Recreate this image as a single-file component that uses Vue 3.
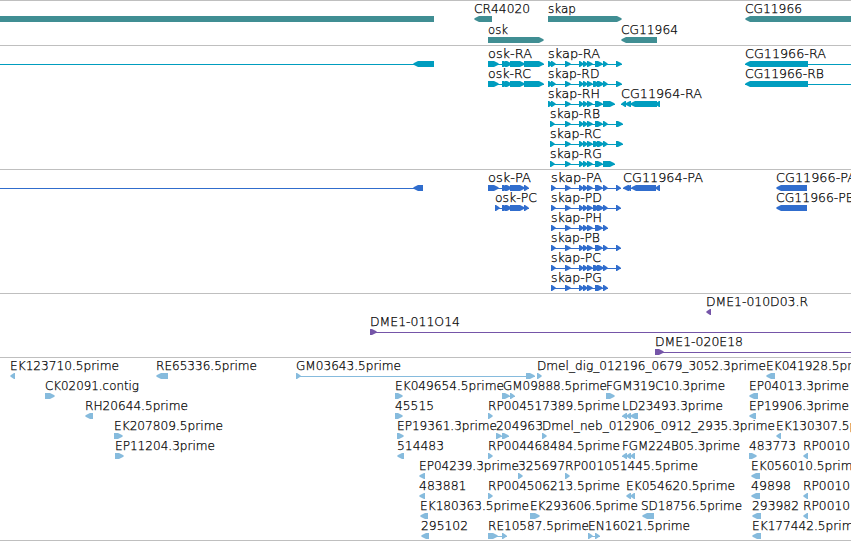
<script setup>
// f(label, x, labelWidth, row, direction, parts, line)
const f = (label, x, w, row, dir, parts, line) => ({ label, x, w, row, dir, parts, line })

const mid = [[565, 571], [579, 584], [583, 588], [587, 593]]
const oskTail = [[502, 509], [505, 512], [510, 521], [516, 525]]

const genes = [
  f('', 0, 0, 0, 0, [[0, 434]]),
  f('CR44020', 474, 56, 0, -1, [[474, 492]]),
  f('skap', 548, 28, 0, 1, [[548, 622]]),
  f('CG11966', 745, 57, 0, -1, [[745, 860]]),
  f('osk', 488, 20, 1, 1, [[488, 544]]),
  f('CG11964', 621, 57, 1, -1, [[621, 657]]),
]
const transcripts = [
  f('', 0, 0, 0, -1, [[413, 434]], [0, 434]),
  f('osk-RA', 488, 44, 0, 1, [[488, 499], ...oskTail, [524, 544]], [488, 544]),
  f('skap-RA', 548, 52, 0, 1, [[548, 553], [551, 556], ...mid, [595, 603], [603, 608], [616, 622]], [548, 622]),
  f('CG11966-RA', 745, 81, 0, -1, [[745, 808]], [745, 851]),
  f('osk-RC', 488, 43, 1, 1, [[488, 499], ...oskTail, [524, 544]], [488, 544]),
  f('skap-RD', 548, 51.5, 1, 1, [[548, 553], [551, 556], ...mid, [593, 600], [597, 604], [603, 608], [616, 622]], [548, 622]),
  f('CG11966-RB', 745, 79, 1, -1, [[745, 808]], [745, 851]),
  f('skap-RH', 548, 52, 2, 1, [[548, 553], [551, 556], ...mid, [595, 603], [603, 615]], [548, 615]),
  f('CG11964-RA', 621, 81, 2, -1, [[621, 626], [625, 631], [630, 657], [655, 660]], [621, 660]),
  f('skap-RB', 550, 50, 3, 1, [[550, 555], ...mid, [595, 603], [603, 608], [616, 623]], [550, 623]),
  f('skap-RC', 550, 51, 4, 1, [[550, 555], ...mid, [593, 600], [597, 604], [603, 608], [616, 623]], [550, 623]),
  f('skap-RG', 550, 52, 5, 1, [[550, 555], ...mid, [595, 603], [603, 615]], [550, 615]),
]
const proteins = [
  f('', 0, 0, 0, -1, [[413, 423]], [0, 423]),
  f('osk-PA', 488, 43, 0, 1, [[488, 499], ...oskTail, [524, 529]], [488, 529]),
  f('skap-PA', 551, 51, 0, 1, [[551, 556], ...mid, [595, 603], [603, 608], [616, 621]], [551, 621]),
  f('CG11964-PA', 623, 80, 0, -1, [[623, 629], [626, 631], [631, 656], [655, 660]], [623, 660]),
  f('CG11966-PA', 776, 80, 0, -1, [[776, 807]]),
  f('osk-PC', 495, 42, 1, 1, [[495, 500], ...oskTail, [524, 529]], [495, 529]),
  f('skap-PD', 551, 51, 1, 1, [[551, 556], ...mid, [593, 600], [597, 604], [603, 608], [616, 621]], [551, 621]),
  f('CG11966-PB', 776, 78, 1, -1, [[776, 807]]),
  f('skap-PH', 551, 51, 2, 1, [[551, 556], ...mid, [595, 603], [603, 608]], [551, 608]),
  f('skap-PB', 551, 49, 3, 1, [[551, 556], ...mid, [595, 603], [603, 608], [616, 621]], [551, 621]),
  f('skap-PC', 551, 50, 4, 1, [[551, 556], ...mid, [593, 600], [597, 604], [603, 608], [616, 621]], [551, 621]),
  f('skap-PG', 551, 51, 5, 1, [[551, 556], ...mid, [595, 603], [603, 608]], [551, 608]),
]
const clones = [
  f('DME1-010D03.R', 706, 102, 0, -1, [[706, 711]]),
  f('DME1-011O14', 370, 90, 1, 1, [[370, 377]], [370, 851]),
  f('DME1-020E18', 655, 88, 2, 1, [[655, 664]], [655, 851]),
]
const ests = [
  f('EK123710.5prime', 10, 109, 0, -1, [[10, 15]]),
  f('RE65336.5prime', 156, 101, 0, -1, [[156, 168]]),
  f('GM03643.5prime', 296, 105, 0, 1, [[296, 301], [526, 535]], [296, 535]),
  f('Dmel_dig_012196_0679_3052.3prime', 537, 229, 0, 1, [[537, 542]]),
  f('EK041928.5prime', 766, 109, 0, -1, [[766, 775]]),
  f('CK02091.contig', 45, 94, 1, 1, [[45, 55]]),
  f('EK049654.5prime', 395, 109, 1, 1, [[395, 403]]),
  f('GM09888.5prime', 503, 104, 1, 1, [[502, 510], [510, 515]], [502, 515]),
  f('FGM319C10.3prime', 606, 119, 1, 1, [[606, 615]]),
  f('EP04013.3prime', 749, 100, 1, -1, [[749, 758]]),
  f('RH20644.5prime', 85, 103, 2, -1, [[85, 93]]),
  f('45515', 395, 39, 2, 1, [[395, 403]]),
  f('RP004517389.5prime', 488, 132, 2, 1, [[488, 493]]),
  f('LD23493.3prime', 622, 101, 2, -1, [[622, 627], [626, 631], [630, 638]], [622, 638]),
  f('EP19906.3prime', 749, 100, 2, -1, [[749, 756]]),
  f('EK207809.5prime', 114, 109, 3, 1, [[114, 123]]),
  f('EP19361.3prime', 397, 100, 3, 1, [[397, 404]]),
  f('204963', 496, 47, 3, 1, [[496, 502], [502, 509]], [496, 509]),
  f('Dmel_neb_012906_0912_2935.3prime', 542, 233, 3, 1, [[542, 547]]),
  f('EK130307.5prime', 776, 109, 3, -1, [[776, 781]]),
  f('EP11204.3prime', 115, 100, 4, 1, [[115, 124]]),
  f('514483', 397, 47, 4, -1, [[397, 404]]),
  f('RP004468484.5prime', 488, 132, 4, 1, [[488, 493]]),
  f('FGM224B05.3prime', 622, 118, 4, -1, [[622, 627], [626, 631], [630, 635]], [622, 635]),
  f('483773', 749, 47, 4, 1, [[749, 757]]),
  f('RP0010', 803, 47, 4, -1, [[803, 808]]),
  f('EP04239.3prime', 419, 100, 5, -1, [[419, 425]]),
  f('325697', 518, 47, 5, 1, [[518, 523]]),
  f('RP001051445.5prime', 565, 133, 5, 1, [[565, 570]]),
  f('EK056010.5prime', 751, 109, 5, -1, [[751, 760]]),
  f('483881', 419, 47.5, 6, -1, [[419, 425]]),
  f('RP004506213.5prime', 488, 132, 6, 1, [[488, 493]]),
  f('EK054620.5prime', 626, 109, 6, -1, [[626, 631], [630, 635]]),
  f('49898', 751, 40, 6, -1, [[751, 760]]),
  f('RP0010', 803, 47, 6, -1, [[803, 808]]),
  f('EK180363.5prime', 420, 109, 7, -1, [[420, 428]]),
  f('EK293606.5prime', 530, 108, 7, 1, [[530, 540]]),
  f('SD18756.5prime', 641, 101, 7, -1, [[642, 654]]),
  f('293982', 752, 47, 7, -1, [[752, 761]]),
  f('RP0010', 803, 47, 7, -1, [[803, 808]]),
  f('295102', 421, 47, 8, -1, [[421, 429]]),
  f('RE10587.5prime', 488, 101, 8, 1, [[488, 498], [502, 507]], [488, 507]),
  f('EN16021.5prime', 588, 102, 8, 1, [[588, 593], [595, 600]], [588, 600]),
  f('EK177442.5prime', 752, 109, 8, -1, [[752, 761]]),
]

// base: baseline of the first row; bar: top of the first glyph, both below the divider
const tracks = [
  { name: 'gene', height: 44, base: 12, bar: 15, pitch: 21, items: genes },
  { name: 'transcript', height: 123, base: 12, bar: 15, pitch: 20, items: transcripts },
  { name: 'protein', height: 123, base: 12, bar: 15, pitch: 20, items: proteins },
  { name: 'clone', height: 63, base: 12, bar: 15, pitch: 20, items: clones },
  { name: 'est', height: 182, base: 12, bar: 15, pitch: 20, items: ests },
]

function shape([a, b], dir, y) {
  if (!dir) return `M${a} ${y}H${b}v6H${a}z`
  const n = Math.min(5, b - a - 1)
  return dir > 0
    ? `M${a} ${y}H${b - n}L${b - 1} ${y + 2}L${b} ${y + 3}L${b - 1} ${y + 4}L${b - n} ${y + 6}H${a}z`
    : `M${b} ${y}H${a + n}L${a + 1} ${y + 2}L${a} ${y + 3}L${a + 1} ${y + 4}L${a + n} ${y + 6}H${b}z`
}
</script>

<template>
  <main class="browser">
    <section v-for="t in tracks" :key="t.name" class="track" :class="t.name">
      <svg width="851" :height="t.height">
        <g v-for="(i, k) in t.items" :key="k">
          <rect v-if="i.line" :x="i.line[0]" :y="t.bar + i.row * t.pitch + 3" :width="i.line[1] - i.line[0]" height="1" />
          <path v-for="(p, n) in i.parts" :key="n" :d="shape(p, i.dir, t.bar + i.row * t.pitch)" />
          <text v-if="i.label" :x="i.x" :y="t.base + i.row * t.pitch" :textLength="i.w" lengthAdjust="spacingAndGlyphs">{{ i.label }}</text>
        </g>
      </svg>
    </section>
  </main>
</template>

<style>
body { background: #fff; }
</style>

<style scoped>
.browser {
  width: 851px;
  overflow: hidden;
  border-bottom: 1px solid #bfbfbf;
}
.track { border-top: 1px solid #bfbfbf; }
svg { display: block; }
text {
  font-family: "DejaVu Sans", sans-serif;
  font-size: 12.2px;
  font-weight: 200;
  fill: #000;
  stroke: #000;
  stroke-width: 0.25px;
}
.gene { fill: #408e93; }
.transcript { fill: #009dbf; }
.protein { fill: #306dcd; }
.clone { fill: #7555a8; }
.est { fill: #86bbdd; }
</style>
